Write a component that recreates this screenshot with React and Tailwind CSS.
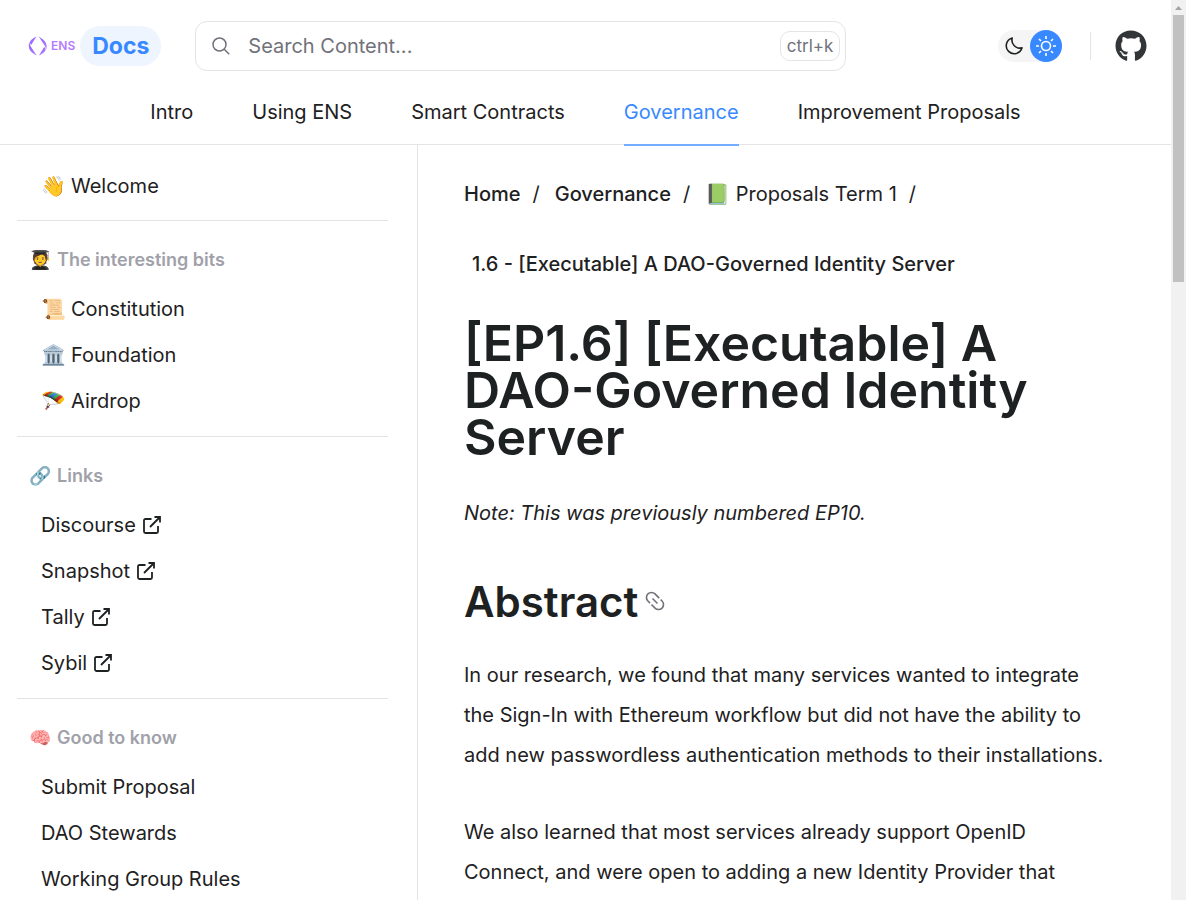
import React from 'react';
import { FaGithub } from 'react-icons/fa';

const topLinks = ['Intro', 'Using ENS', 'Smart Contracts', 'Governance', 'Improvement Proposals'];

const groups = [
  { items: [{ emoji: '👋', label: 'Welcome' }] },
  {
    emoji: '🧑‍🎓',
    title: 'The interesting bits',
    items: [
      { emoji: '📜', label: 'Constitution' },
      { emoji: '🏛️', label: 'Foundation' },
      { emoji: '🪂', label: 'Airdrop' },
    ],
  },
  {
    emoji: '🔗',
    title: 'Links',
    items: [
      { label: 'Discourse', external: true },
      { label: 'Snapshot', external: true },
      { label: 'Tally', external: true },
      { label: 'Sybil', external: true },
    ],
  },
  {
    emoji: '🧠',
    title: 'Good to know',
    items: [{ label: 'Submit Proposal' }, { label: 'DAO Stewards' }, { label: 'Working Group Rules' }],
  },
];

function EnsMark() {
  return (
    <svg width="19" height="20" viewBox="0 0 19 20" aria-hidden="true">
      <defs>
        <linearGradient id="ens" x1="0" y1="0" x2="1" y2="1">
          <stop offset="0" stopColor="#8a63ff" />
          <stop offset="1" stopColor="#b57bff" />
        </linearGradient>
      </defs>
      <g fill="url(#ens)">
        <path d="M8.4.4 3.200 9C2 8 1.500 6.800 2.100 5.400 3 3.300 6 1.600 8.400.4Z" />
        <path d="M1 11.400C.5 8.800.9 7 1.500 5.900 1.500 8 2.200 9.700 3.100 11L8.700 19.600C4.800 17 1.500 14.900 1 11.400Z" />
        <path d="M11 19.600 16.200 11C17.400 12 17.900 13.200 17.300 14.600 16.400 16.700 13.400 18.400 11 19.600Z" />
        <path d="M18.400 8.600C18.900 11.200 18.500 13 17.900 14.100 17.900 12 17.200 10.300 16.300 9L10.700.4C14.600 3 17.900 5.100 18.400 8.600Z" />
      </g>
    </svg>
  );
}

function ExternalIcon() {
  return (
    <svg width="18" height="18" viewBox="0 0 18 18" fill="none" stroke="currentColor" strokeWidth="1.8" aria-hidden="true">
      <path d="M8.500 3H2.500Q1 3 1 4.500V15.500Q1 17 2.500 17H13.500Q15 17 15 15.500V10" />
      <path d="M11.500 1H17V6.500M17 1 7 11" />
    </svg>
  );
}

function SidebarItem({ item }) {
  return (
    <li>
      <a href="#" className="flex h-[46px] items-center gap-[7px] pl-6 text-[20px]">
        {item.emoji && <span className="-mr-[3px] w-[26px]">{item.emoji}</span>}
        {item.label}
        {item.external && <ExternalIcon />}
      </a>
    </li>
  );
}

export default function App() {
  return (
    <div className="flex h-screen overflow-hidden bg-white font-['Inter','Noto_Color_Emoji',sans-serif] text-[#1e2122]">
      <div className="flex min-w-0 flex-1 flex-col">
        <header className="shrink-0 border-b border-[#e4e4e7]">
          <div className="flex h-[92px] items-center pr-6 pl-7">
            <a href="#" className="flex items-center">
              <EnsMark />
              <span className="ml-1 text-[12px] font-semibold text-[#b57bff]">ENS</span>
              <span className="ml-[5px] rounded-full bg-[#eef5ff] px-3 py-1 text-[23px] leading-8 font-bold text-[#3889ff]">Docs</span>
            </a>
            <label className="ml-[34px] flex h-[50px] w-[651px] items-center rounded-xl border border-[#e4e4e7] pr-[5px] pl-4">
              <svg width="18" height="18" viewBox="0 0 18 18" fill="none" stroke="#71717a" strokeWidth="1.5" aria-hidden="true">
                <circle cx="7.500" cy="7.500" r="6.500" />
                <path d="m12.200 12.200 5 5" />
              </svg>
              <input aria-label="Search Content" placeholder="Search Content..." className="ml-[18px] min-w-0 flex-1 text-[20px] outline-none placeholder:text-[#71717a]" />
              <kbd className="rounded-[10px] border border-[#e4e4e7] px-1.5 font-['Inter'] text-[17px] leading-7 text-[#71717a]">ctrl+k</kbd>
            </label>
            <button aria-label="Toggle colour theme" className="ml-auto flex h-8 w-16 items-center justify-between rounded-full bg-[#f5f5f5] pl-1.5">
              <svg width="20" height="20" viewBox="0 0 20 20" fill="none" stroke="#1e2122" strokeWidth="1.600" strokeLinejoin="round" aria-hidden="true">
                <path d="M8.200 2A8 8 0 1 0 18 11.800 8 8 0 0 1 8.200 2Z" />
              </svg>
              <span className="flex h-8 w-8 items-center justify-center rounded-full bg-[#3889ff]">
                <svg width="22" height="22" viewBox="0 0 22 22" fill="none" stroke="white" strokeWidth="1.600" aria-hidden="true">
                  <circle cx="11" cy="11" r="4.500" />
                  <path d="M11 1v3M11 18v3M1 11h3M18 11h3M4 4l2 2M16 16l2 2M4 18l2-2M16 6l2-2" />
                </svg>
              </span>
            </button>
            <div className="mr-6 ml-7 h-7 w-px bg-[#e4e4e7]" />
            <a href="#" aria-label="GitHub"><FaGithub size={32} color="#333638" /></a>
          </div>
          <nav className="flex justify-center gap-[59px] text-[20px]">
            {topLinks.map((label) => (
              <a key={label} href="#" className={label === 'Governance' ? '-mb-[2px] border-b-2 border-[#74adff] pt-[5px] pb-4 text-[#3889ff]' : 'pt-[5px] pb-[17px]'}>
                {label}
              </a>
            ))}
          </nav>
        </header>
        <div className="flex min-h-0 flex-1 overflow-hidden">
          <aside className="w-[418px] shrink-0 border-r border-[#e4e4e7] pr-[29px] pl-[17px]">
            {groups.map((group, index) => (
              <section key={index} className={index === 0 ? 'pt-[18px] pb-[11px]' : 'border-t border-[#e4e4e7] pt-[15px] pb-3'}>
                {group.title && (
                  <h2 className="mb-1 flex h-[46px] items-center pl-3 text-[18px] font-semibold text-[#a1a1aa]">
                    <span className="mr-1 w-6">{group.emoji}</span>
                    {group.title}
                  </h2>
                )}
                <ul>{group.items.map((item) => <SidebarItem key={item.label} item={item} />)}</ul>
              </section>
            ))}
          </aside>
          <main className="min-w-0 flex-1 px-[46px] pt-[34px] text-[20px]">
            <nav aria-label="Breadcrumb" className="flex flex-wrap leading-[30px]">
              <a href="#" className="font-medium">Home</a>
              <span className="mr-[15px] ml-3">/</span>
              <a href="#" className="font-medium">Governance</a>
              <span className="mr-[15px] ml-3">/</span>
              <a href="#">📗 Proposals Term 1</a>
              <span className="mr-[15px] ml-3">/</span>
            </nav>
            <p className="mt-10 pl-2 leading-[30px] font-medium">1.6 - [Executable] A DAO-Governed Identity Server</p>
            <h1 className="mt-[41px] text-[50px] leading-[47px] font-semibold">[EP1.6] [Executable] A DAO-Governed Identity Server</h1>
            <p className="mt-8 leading-10 italic">Note: This was previously numbered EP10.</p>
            <h2 className="mt-[41px] flex items-center gap-1.5 text-[42px] leading-[56px] font-semibold">
              Abstract
              <svg width="24" height="24" viewBox="0 0 24 24" fill="none" stroke="#71717a" strokeWidth="1.6" aria-hidden="true">
                <g transform="rotate(45 11 11)">
                  <path d="M9 16H6A5 5 0 0 1 6 6h6" />
                  <path d="M14 6H16a5 5 0 0 1 0 10h-5" />
                  <path d="M7.500 11h7" />
                </g>
              </svg>
            </h2>
            <p className="mt-[25px] max-w-[646px] leading-10">In our research, we found that many services wanted to integrate the Sign-In with Ethereum workflow but did not have the ability to add new passwordless authentication methods to their installations.</p>
            <p className="mt-[37px] max-w-[646px] leading-10">We also learned that most services already support OpenID Connect, and were open to adding a new Identity Provider that</p>
          </main>
        </div>
      </div>
      <div aria-hidden="true" className="flex w-[15px] shrink-0 flex-col items-center bg-[#f1f1f1]">
        <svg width="15" height="15" viewBox="0 0 15 15"><path d="m4 10 3.500-4 3.500 4Z" fill="#a3a3a3" /></svg>
        <div className="h-[267px] w-[11px] bg-[#c1c1c1]" />
      </div>
    </div>
  );
}
